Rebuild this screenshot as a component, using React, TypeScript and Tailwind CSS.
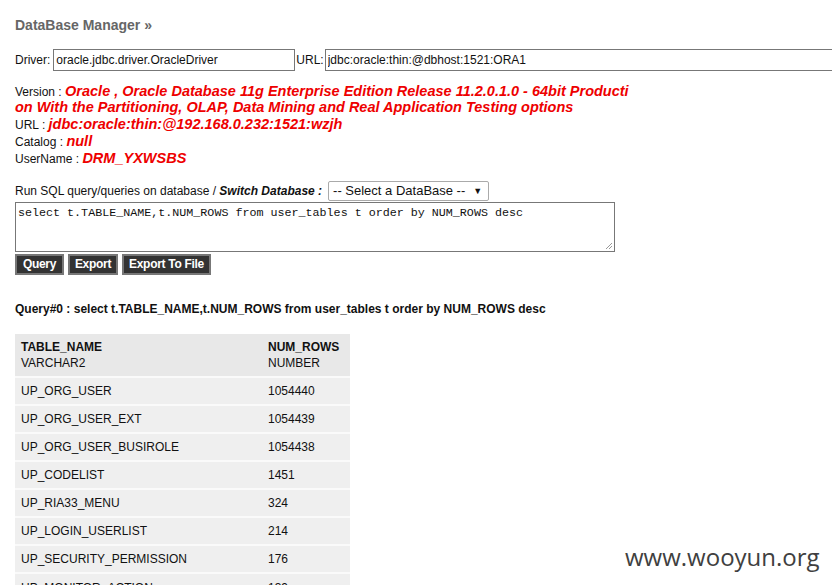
const rows: [string, string][] = [
  ["UP_ORG_USER", "1054440"],
  ["UP_ORG_USER_EXT", "1054439"],
  ["UP_ORG_USER_BUSIROLE", "1054438"],
  ["UP_CODELIST", "1451"],
  ["UP_RIA33_MENU", "324"],
  ["UP_LOGIN_USERLIST", "214"],
  ["UP_SECURITY_PERMISSION", "176"],
  ["UP_MONITOR_ACTION", "139"],
];

const sql = "select t.TABLE_NAME,t.NUM_ROWS from user_tables t order by NUM_ROWS desc";

const buttons: [string, string][] = [
  ["Query", "w-[49px]"],
  ["Export", "w-[50px]"],
  ["Export To File", "w-[89px]"],
];

function Info({ label, children }: { label: string; children: React.ReactNode }) {
  return (
    <div className="leading-[17px]">
      {label} :{" "}
      <span className="text-[14.5px] font-bold italic leading-[14px] text-[#ee0000]">{children}</span>
    </div>
  );
}

export default function App() {
  return (
    <div className="relative h-[585px] w-[832px] overflow-hidden bg-white pl-[15px] pt-[15px] font-['Liberation_Sans',Arial,sans-serif] text-[12px] text-[#111]">
      <h1 className="text-[14px] font-bold leading-5 text-[#666]">DataBase Manager »</h1>

      {/* connection */}
      <div className="mt-[14px] flex items-center">
        <span className="mr-[3px]">Driver:</span>
        <input
          readOnly
          value="oracle.jdbc.driver.OracleDriver"
          className="h-[22px] w-[242px] border border-[#777] px-[2px] text-[12px] outline-none"
        />
        <span className="ml-[1px] mr-[1px]">URL:</span>
        <input
          readOnly
          value="jdbc:oracle:thin:@dbhost:1521:ORA1"
          className="-mr-[20px] h-[22px] flex-1 border border-[#777] px-[2px] text-[12px] outline-none"
        />
      </div>

      {/* connection info */}
      <div className="mt-[13px] w-[660px]">
        <div className="mb-px leading-[16px]">
          Version :{" "}
          <span className="text-[14.5px] font-bold italic leading-[14px] text-[#ee0000]">
            Oracle , Oracle Database 11g Enterprise Edition Release 11.2.0.1.0 - 64bit Producti
            <br />
            on With the Partitioning, OLAP, Data Mining and Real Application Testing options
          </span>
        </div>
        <Info label="URL">jdbc:oracle:thin:@192.168.0.232:1521:wzjh</Info>
        <Info label="Catalog">null</Info>
        <Info label="UserName">DRM_YXWSBS</Info>
      </div>

      {/* query form */}
      <div className="mt-[13px] flex items-center">
        <span>
          Run SQL query/queries on database / <b className="italic">Switch Database :</b>
        </span>
        <div className="relative ml-[6px] flex h-[20px] w-[161px] items-center rounded-[2px] border border-[#aaa] pl-[4px] text-[13px]">
          -- Select a DataBase --
          <span className="absolute right-[6px] top-[3px] text-[9px]">▼</span>
        </div>
      </div>
      <div className="relative mt-px h-[50px] w-[600px] border border-[#777]">
        <div className="pl-[2px] pt-[3px] font-['Liberation_Mono','Courier_New',monospace] text-[11.7px] leading-[14px]">
          {sql}
        </div>
        <svg className="absolute bottom-[1px] right-[1px]" width="9" height="9" viewBox="0 0 9 9">
          <path d="M8 2 L2 8 M8 5 L5 8" stroke="#999" strokeWidth="1" />
        </svg>
      </div>
      <div className="mt-[2px] flex gap-[4px]">
        {buttons.map(([b, w]) => (
          <button
            key={b}
            className={`${w} h-[21px] border-2 border-[#777] bg-[#333] text-[12px] font-bold leading-[17px] tracking-[-0.3px] text-white`}
          >
            {b}
          </button>
        ))}
      </div>

      <div className="mt-[26px] font-bold leading-4">Query#0 : {sql}</div>

      {/* results */}
      <table className="mt-[17px] w-[335px] border-collapse">
        <thead>
          <tr className="h-[43px] bg-[#e8e8e8] text-left align-middle">
            <th className="pl-[6px] font-normal leading-[16px]">
              <b>TABLE_NAME</b>
              <br />
              VARCHAR2
            </th>
            <th className="w-[82px] font-normal leading-[16px]">
              <b>NUM_ROWS</b>
              <br />
              NUMBER
            </th>
          </tr>
        </thead>
        <tbody>
          {rows.map(([n, c]) => (
            <tr key={n} className="h-[28px] border-t-2 border-[#fafafa] bg-[#efefef]">
              <td className="pl-[6px]">{n}</td>
              <td>{c}</td>
            </tr>
          ))}
        </tbody>
      </table>

      <div className="absolute left-[625px] top-[542px] font-['Open_Sans',sans-serif] text-[24px] leading-[30px] text-[#404040]">
        www.wooyun.org
      </div>
    </div>
  );
}
